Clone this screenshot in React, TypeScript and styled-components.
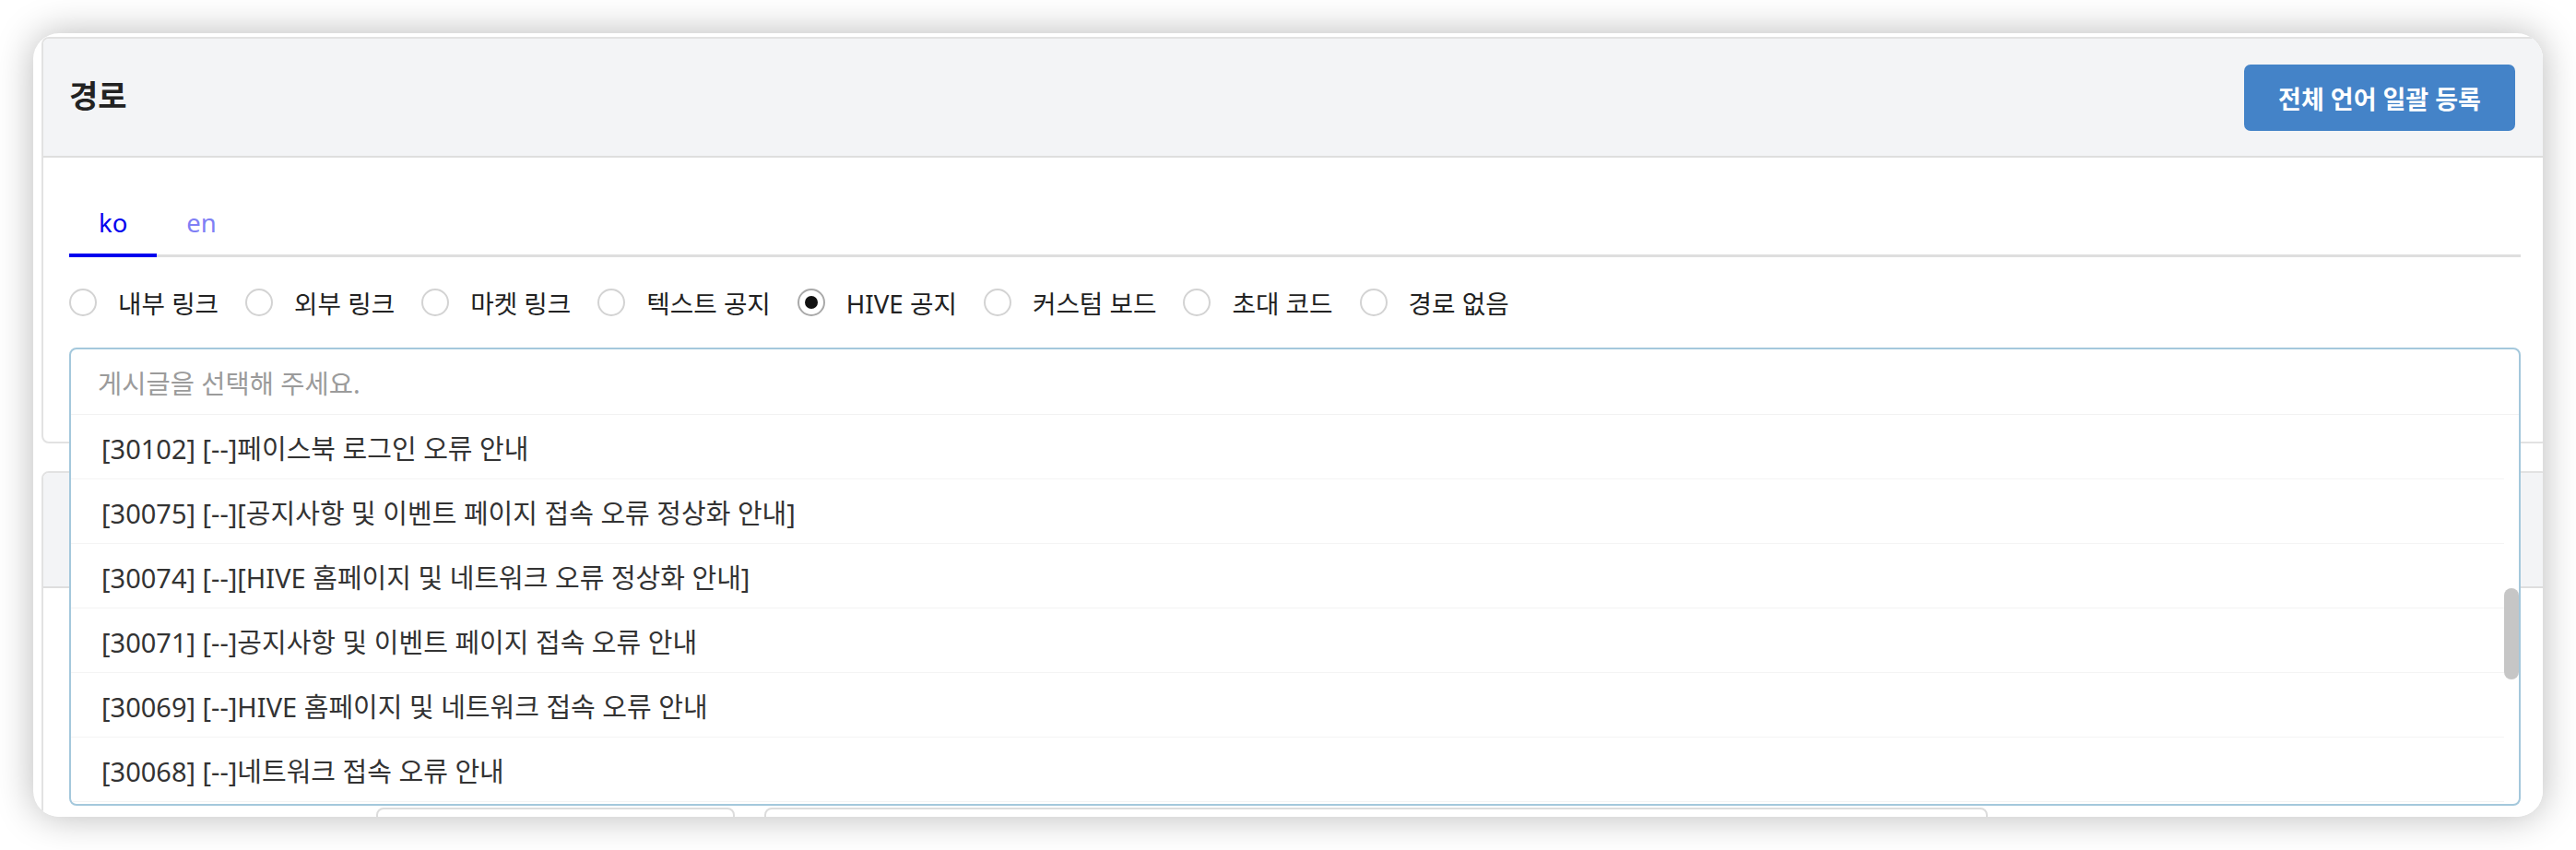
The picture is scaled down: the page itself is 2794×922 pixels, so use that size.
import styled, { createGlobalStyle } from 'styled-components';

const GlobalStyle = createGlobalStyle`
    html, body {
        margin: 0;
        padding: 0;
        background: #ffffff;
    }
    body {
        font-family: 'Noto Sans', 'Noto Sans CJK KR', sans-serif;
        color: #222222;
    }
    * {
        box-sizing: border-box;
    }
`;

const BORDER = '#e2e2e2';
const HEADER_BG = '#f3f4f6';
const SELECT_BORDER = '#a4c8dc';

const Page = styled.div`
    width: 2794px;
    height: 922px;
    padding: 36px 0 0 36px;
    overflow: hidden;
`;

const Frame = styled.div`
    width: 2722px;
    height: 850px;
    border-radius: 28px;
    overflow: hidden;
    background: #ffffff;
    box-shadow: 0 0 40px rgba(0, 0, 0, 0.28);
`;

const Content = styled.div`
    display: flex;
    flex-direction: column;
    gap: 30px;
    padding: 4px 0 0 9px;
`;

const Card = styled.section`
    width: 2719px;
    flex-shrink: 0;
    border: 2px solid ${BORDER};
    border-radius: 8px;
    background: #ffffff;
`;

const CardHeader = styled.header<{ $height?: number }>`
    display: flex;
    align-items: center;
    justify-content: space-between;
    min-height: ${({ $height }) => ($height ? `${$height}px` : 'auto')};
    padding: 28px 34px 27px 28px;
    background: ${HEADER_BG};
    border-bottom: 2px solid #dedede;
    border-radius: 6px 6px 0 0;
`;

const Title = styled.h2`
    margin: 0 0 8px;
    font-size: 34px;
    font-weight: 700;
    color: #222222;
`;

const PrimaryButton = styled.button`
    width: 294px;
    height: 72px;
    border: 0;
    border-radius: 7px;
    background: #4483c8;
    color: #ffffff;
    font-family: inherit;
    font-size: 27px;
    font-weight: 700;
    cursor: pointer;
`;

const CardBody = styled.div<{ $top?: number }>`
    display: flex;
    flex-direction: column;
    gap: 34px;
    padding: ${({ $top }) => $top ?? 28}px 28px 30px;
`;

const TabList = styled.div`
    display: flex;
    box-shadow: inset 0 -3px 0 #dedede;
`;

const Tab = styled.button<{ $active?: boolean }>`
    display: flex;
    align-items: center;
    height: 80px;
    padding: 8px 32px 0;
    border: 0;
    border-bottom: 4px solid ${({ $active }) => ($active ? '#0000ee' : 'transparent')};
    background: none;
    font-family: inherit;
    font-size: 27.5px;
    color: ${({ $active }) => ($active ? '#0000ee' : '#7f7ff5')};
    cursor: pointer;
`;

const RadioRow = styled.div`
    display: flex;
    align-items: center;
    gap: 29px;
    height: 30px;
`;

const RadioItem = styled.label`
    display: flex;
    align-items: center;
    gap: 23px;
    font-size: 27.7px;
    color: #222222;
    cursor: pointer;
`;

const RadioCircle = styled.span<{ $checked?: boolean }>`
    display: flex;
    align-items: center;
    justify-content: center;
    width: 30px;
    height: 30px;
    border-radius: 50%;
    border: 2px solid ${({ $checked }) => ($checked ? '#a9a9a9' : '#d3d3d3')};
    background: #ffffff;

    &::after {
        content: '';
        display: ${({ $checked }) => ($checked ? 'block' : 'none')};
        width: 14px;
        height: 14px;
        border-radius: 50%;
        background: #111111;
    }
`;

const SelectBox = styled.div`
    position: relative;
    height: 72px;
`;

const Dropdown = styled.div`
    position: absolute;
    top: 0;
    left: 0;
    right: 0;
    z-index: 5;
    border: 2px solid ${SELECT_BORDER};
    border-radius: 8px;
    background: #ffffff;
    overflow: hidden;
`;

const Placeholder = styled.div`
    display: flex;
    align-items: center;
    height: 71px;
    padding-left: 29px;
    border-bottom: 1px solid #f2f2f2;
    font-size: 28.5px;
    color: #9b9b9b;
`;

const ListArea = styled.div`
    display: flex;
    height: 422px;
    overflow: hidden;
`;

const Options = styled.ul`
    flex: 1;
    margin: 0;
    padding: 0;
    list-style: none;
`;

const Option = styled.li`
    display: flex;
    align-items: center;
    height: 70px;
    padding-left: 33px;
    border-bottom: 1px solid #f4f4f4;
    font-size: 29px;
    color: #333333;
    white-space: nowrap;
    cursor: pointer;
`;

const Track = styled.div`
    width: 16px;
    padding-top: 188px;
`;

const Thumb = styled.div`
    height: 99px;
    border-radius: 8px;
    background: #c6c6c6;
`;

const FieldRow = styled.div`
    display: grid;
    grid-template-columns: 301px 389px 1327px;
    column-gap: 32px;
`;

const FieldLabel = styled.div`
    grid-column: 1;
`;

const FieldInput = styled.div`
    height: 72px;
    border: 2px solid #dcdcdc;
    border-radius: 8px;
    background: #ffffff;
`;

const ROUTE_TYPES = [
    '내부 링크',
    '외부 링크',
    '마켓 링크',
    '텍스트 공지',
    'HIVE 공지',
    '커스텀 보드',
    '초대 코드',
    '경로 없음',
];

const NOTICES = [
    '[30102] [--]페이스북 로그인 오류 안내',
    '[30075] [--][공지사항 및 이벤트 페이지 접속 오류 정상화 안내]',
    '[30074] [--][HIVE 홈페이지 및 네트워크 오류 정상화 안내]',
    '[30071] [--]공지사항 및 이벤트 페이지 접속 오류 안내',
    '[30069] [--]HIVE 홈페이지 및 네트워크 접속 오류 안내',
    '[30068] [--]네트워크 접속 오류 안내',
];

export default function App() {
    const selected = 'HIVE 공지';

    return (
        <>
            <GlobalStyle />
            <Page>
                <Frame>
                    <Content>
                        <Card>
                            <CardHeader>
                                <Title>경로</Title>
                                <PrimaryButton>전체 언어 일괄 등록</PrimaryButton>
                            </CardHeader>
                            <CardBody>
                                <TabList>
                                    <Tab $active>ko</Tab>
                                    <Tab>en</Tab>
                                </TabList>
                                <RadioRow>
                                    {ROUTE_TYPES.map((type) => (
                                        <RadioItem key={type}>
                                            <RadioCircle $checked={type === selected} />
                                            {type}
                                        </RadioItem>
                                    ))}
                                </RadioRow>
                                <SelectBox>
                                    <Dropdown>
                                        <Placeholder>게시글을 선택해 주세요.</Placeholder>
                                        <ListArea>
                                            <Options>
                                                {NOTICES.map((notice) => (
                                                    <Option key={notice}>{notice}</Option>
                                                ))}
                                            </Options>
                                            <Track>
                                                <Thumb />
                                            </Track>
                                        </ListArea>
                                    </Dropdown>
                                </SelectBox>
                            </CardBody>
                        </Card>
                        <Card>
                            <CardHeader $height={125} />
                            <CardBody $top={238}>
                                <FieldRow>
                                    <FieldLabel />
                                    <FieldInput />
                                    <FieldInput />
                                </FieldRow>
                            </CardBody>
                        </Card>
                    </Content>
                </Frame>
            </Page>
        </>
    );
}
